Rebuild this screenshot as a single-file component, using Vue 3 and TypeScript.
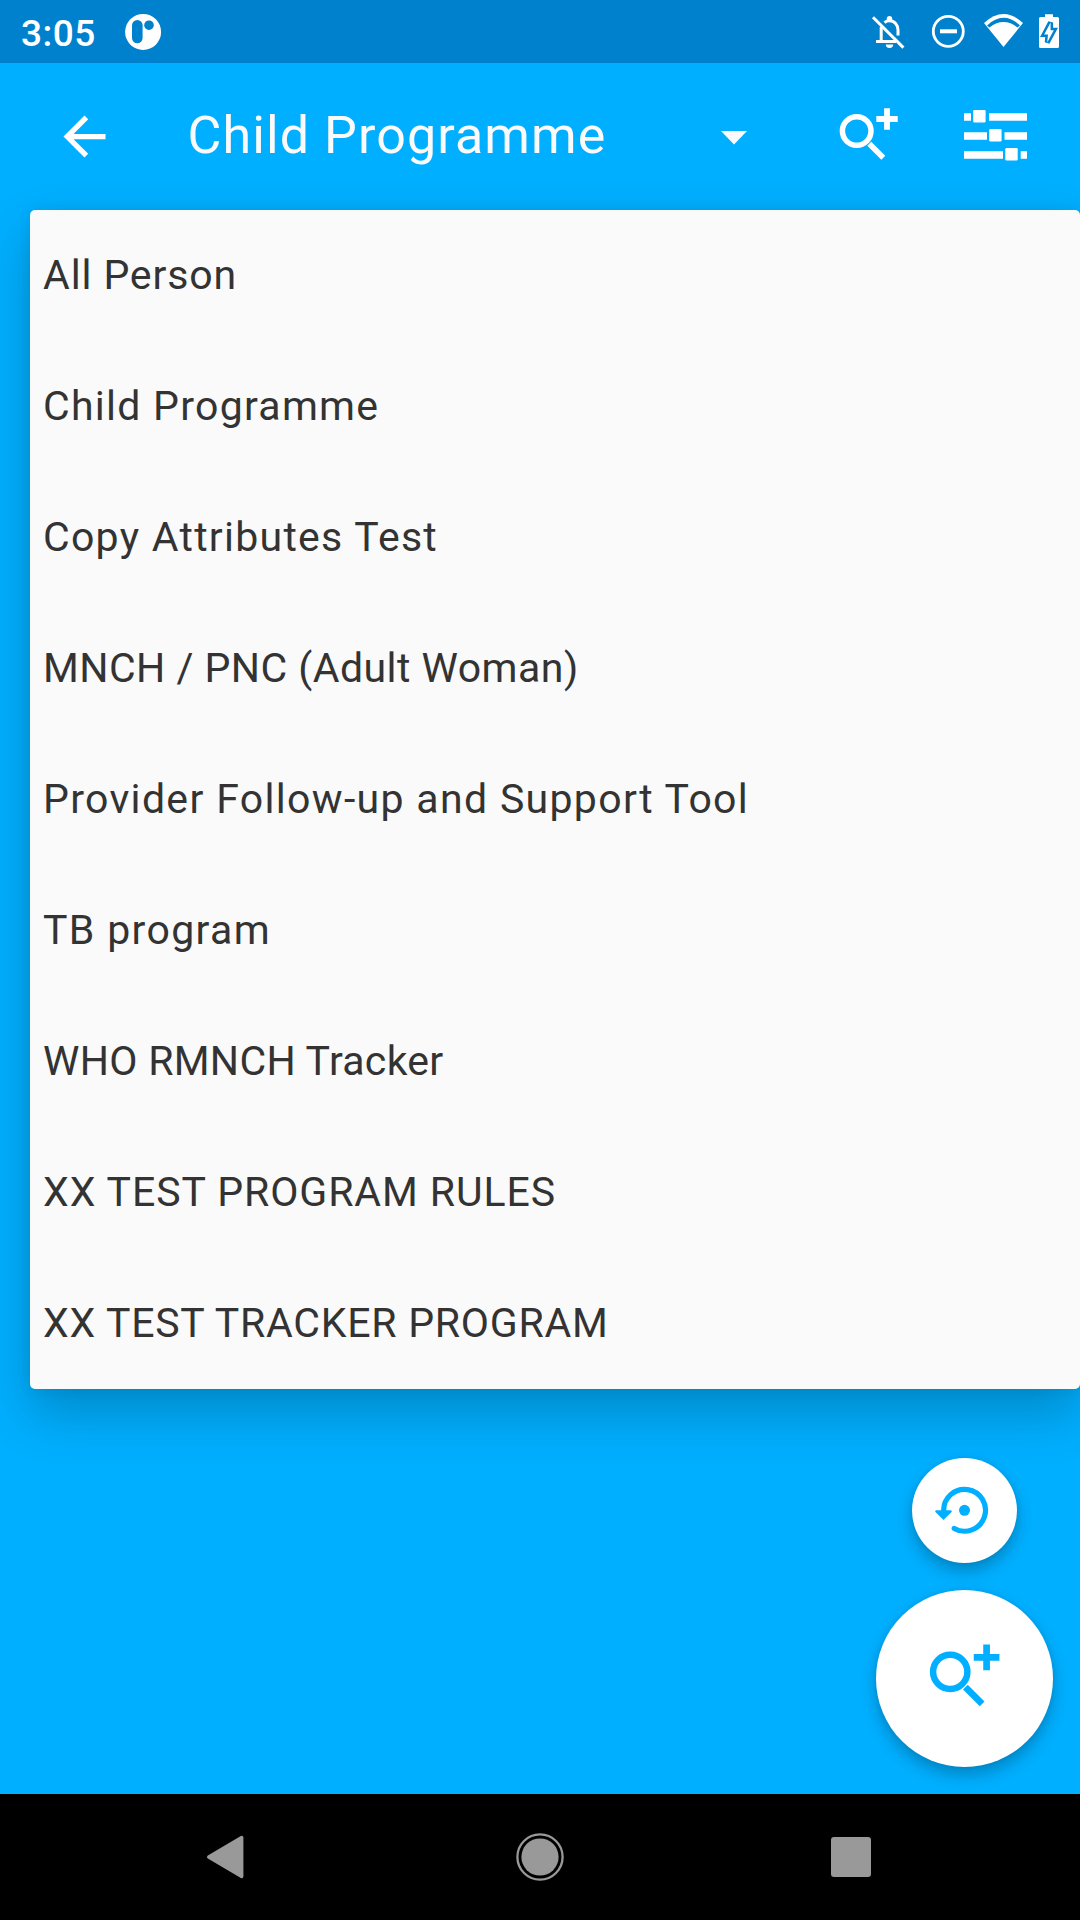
<script setup lang="ts">
interface Programme {
  name: string
  tracking: number
}

const selected = 'Child Programme'

const programmes: Programme[] = [
  { name: 'All Person', tracking: 0.88 },
  { name: 'Child Programme', tracking: 1.27 },
  { name: 'Copy Attributes Test', tracking: 1.27 },
  { name: 'MNCH / PNC (Adult Woman)', tracking: 0.46 },
  { name: 'Provider Follow-up and Support Tool', tracking: 1.33 },
  { name: 'TB program', tracking: 1.35 },
  { name: 'WHO RMNCH Tracker', tracking: 0.3 },
  { name: 'XX TEST PROGRAM RULES', tracking: 0.93 },
  { name: 'XX TEST TRACKER PROGRAM', tracking: 0.74 },
]
</script>

<template>
  <div class="screen">
    <header class="status">
      <span class="clock">3:05</span>
      <svg class="app-badge" width="38" height="38" viewBox="124 13 38 38">
        <circle cx="143.1" cy="31.9" r="18" fill="#fff" />
        <rect x="132" y="20" width="10.6" height="23.2" rx="5.3" fill="#0081cd" />
        <circle cx="149" cy="25.2" r="4.8" fill="#0081cd" />
      </svg>
      <svg class="system" width="200" height="48" viewBox="865 8 200 48">
        <g fill="none" stroke="#fff" stroke-width="3">
          <path d="M873 17.2L903.4 47.6" />
          <path d="M881.2 27V41.5M876 41.5H896" />
          <path d="M884.5 22.6C886 21.3 887.8 20.8 889.5 20.8C894.5 20.8 898 25 898 30V35.5" />
        </g>
        <path d="M886.8 21V18.6a2.7 2.7 0 0 1 5.4 0V21zM885.8 44.6h7.4a3.7 3.4 0 0 1-7.4 0z" fill="#fff" />
        <circle cx="948.3" cy="31.3" r="15" fill="none" stroke="#fff" stroke-width="2.8" />
        <path d="M940 31.3H957" stroke="#fff" stroke-width="4" />
        <path d="M984 23Q1003.5 5 1023 23L1003.5 47Z" fill="#fff" />
        <path d="M987 25.5Q1003.5 10 1020 25.5L1017.5 27.5Q1003.5 16.7 989.5 27.5Z" fill="#0081cd" />
        <path d="M1045 14.3h8v2.7h4.5q1.5 0 1.5 1.5V46.5q0 1.5-1.5 1.5H1040.500q-1.500 0-1.500-1.500V18.500q0-1.500 1.500-1.500H1045z" fill="#fff" />
        <path class="bolt" d="M1050.6 22.500L1044.200 34.500H1048L1047.200 42.500L1053.800 30.300H1050.600z" />
      </svg>
    </header>

    <nav class="toolbar">
      <svg class="back" width="63" height="63" viewBox="0 0 24 24">
        <path d="M20 11H7.83l5.590-5.590L12 4l-8 8 8 8 1.410-1.410L7.830 13H20z" fill="#fff" />
      </svg>
      <span class="title">{{ selected }}</span>
      <svg class="caret" width="26" height="14" viewBox="0 0 26 14">
        <path d="M0 0H26L13 13.5z" fill="#fafafa" />
      </svg>
      <svg class="search" width="61" height="54" viewBox="0 0 61 54">
        <g fill="none" stroke="#fff">
          <circle cx="17.7" cy="24" r="14.3" stroke-width="5.5" />
          <path d="M30.3 36.7L44.3 50.7" stroke-width="5.6" />
          <path d="M37.3 12H58.7M48 1.3V22.7" stroke-width="5.8" />
        </g>
      </svg>
      <svg class="filter" width="63" height="54" viewBox="964 108 63 54" fill="#fff">
        <path d="M964 113.300h7v7.400h-7zM989 113.300h38v7.400h-38zM964 132.300h23v7.400h-23zM1004.500 132.300h22.500v7.400h-22.500zM964 151.300h39v7.400h-39zM1020.700 151.300h6.300v7.400h-6.300z" />
        <rect x="973.2" y="110" width="12.4" height="12.4" rx="1.2" />
        <rect x="989.2" y="129" width="12.4" height="12.4" rx="1.2" />
        <rect x="1005.3" y="148" width="12.4" height="12.4" rx="1.2" />
      </svg>
    </nav>

    <ul class="dropdown">
      <li v-for="p in programmes" :key="p.name">
        <span :style="{ letterSpacing: p.tracking + 'px' }">{{ p.name }}</span>
      </li>
    </ul>

    <main class="actions">
      <button class="fab small" aria-label="Sync">
        <svg width="105" height="105" viewBox="912 1458 105 105">
          <path d="M943.7 1511A20.900 20.900 0 1 1 954.200 1528.400" fill="none" stroke="#00afff" stroke-width="5.2" stroke-linecap="round" />
          <path d="M936.200 1510.300H950.800Q952.600 1510.800 951.600 1512L943.500 1520L935.400 1512Q934.400 1510.800 936.200 1510.300z" fill="#00afff" />
          <circle cx="964.5" cy="1510.3" r="5.5" fill="#00afff" />
        </svg>
      </button>
      <button class="fab large" aria-label="Search">
        <svg width="73.2" height="64.8" viewBox="0 0 61 54">
          <g fill="none" stroke="#00afff">
            <circle cx="17.7" cy="24" r="14.3" stroke-width="5.4" />
            <path d="M30.3 36.7L44.3 50.7" stroke-width="5.6" />
            <path d="M37.3 12H58.7M48 1.3V22.7" stroke-width="5.6" />
          </g>
        </svg>
      </button>
    </main>

    <footer class="navbar">
      <svg width="40" height="48" viewBox="205 1833 40 48">
        <path d="M241.700 1837.500V1876.500L208.700 1857z" fill="#999" stroke="#999" stroke-width="3.4" stroke-linejoin="round" />
      </svg>
      <svg class="home" width="50" height="50" viewBox="515 1832 50 50">
        <circle cx="540" cy="1857" r="22.6" fill="none" stroke="#999" stroke-width="2.3" />
        <circle cx="540" cy="1857" r="18.6" fill="#999" />
      </svg>
      <svg width="40" height="40" viewBox="0 0 40 40">
        <rect width="40" height="40" rx="3" fill="#999" />
      </svg>
    </footer>
  </div>
</template>

<style>
body {
  margin: 0;
}
</style>

<style scoped>
.screen {
  box-sizing: border-box;
  width: 1080px;
  height: 1920px;
  display: flex;
  flex-direction: column;
  overflow: hidden;
  background: #00afff;
  font-family: Roboto, "Liberation Sans", sans-serif;
}
svg {
  display: block;
  flex: none;
}
.status {
  height: 63px;
  flex: none;
  display: flex;
  align-items: center;
  background: #0081cd;
  box-sizing: border-box;
  padding: 0 15px 0 21px;
}
.clock {
  width: 103px;
  padding-top: 4px;
  font-size: 37px;
  line-height: 42px;
  font-weight: 500;
  letter-spacing: 0.5px;
  color: #fff;
}
.system {
  margin-left: auto;
}
.bolt {
  fill: #fff;
  stroke: #0081cd;
  stroke-width: 5px;
  paint-order: stroke;
}
.toolbar {
  height: 147px;
  flex: none;
  display: flex;
  align-items: center;
  box-sizing: border-box;
  padding: 0 53px 0 52.5px;
}
.title {
  width: 534px;
  margin: 0 0 2px 72px;
  font-size: 52px;
  line-height: 62px;
  letter-spacing: 1.1px;
  color: #fafafa;
  white-space: nowrap;
}
.caret {
  margin-top: 2px;
  margin-left: -1px;
}
.search {
  margin: 0 0 5px 92px;
}
.filter {
  margin-left: auto;
  margin-bottom: 3px;
}
.dropdown {
  position: relative;
  z-index: 2;
  flex: none;
  list-style: none;
  margin: 0 0 0 30px;
  padding: 0;
  border-radius: 5px;
  background: #fafafa;
  box-shadow: 0 24px 52px rgba(0, 0, 0, 0.22), 0 0 14px rgba(0, 0, 0, 0.08);
}
.dropdown li {
  box-sizing: border-box;
  height: 131px;
  display: flex;
  align-items: center;
  padding: 0 0 2px 13px;
  font-size: 41px;
  color: #333;
  white-space: nowrap;
}
.actions {
  flex: 1;
  display: flex;
  flex-direction: column;
  align-items: flex-end;
  gap: 27px;
  padding: 69px 27px 0 0;
}
.fab {
  display: flex;
  align-items: center;
  justify-content: center;
  flex: none;
  border: 0;
  padding: 0;
  border-radius: 50%;
  background: #fff;
  box-shadow: 0 8px 16px rgba(0, 0, 0, 0.24), 0 0 5px rgba(0, 0, 0, 0.06);
}
.small {
  width: 105px;
  height: 105px;
  margin-right: 36px;
}
.large {
  box-sizing: border-box;
  width: 177px;
  height: 177px;
  padding: 0 0 7px 2px;
}
.navbar {
  position: relative;
  z-index: 1;
  height: 126px;
  flex: none;
  display: flex;
  align-items: center;
  justify-content: space-between;
  box-sizing: border-box;
  padding: 0 209px 0 205px;
  background: #000;
}
.home {
  margin-left: 4px;
}
</style>
